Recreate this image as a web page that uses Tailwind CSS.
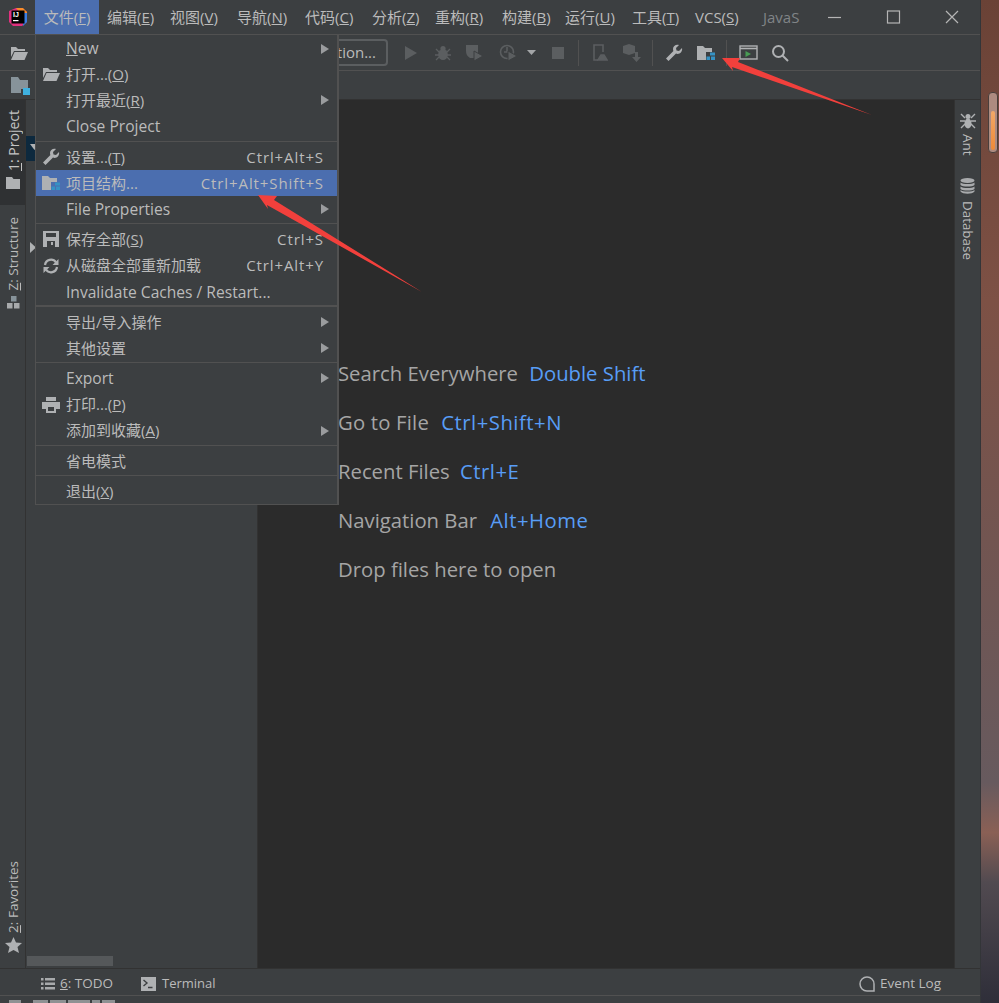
<!DOCTYPE html>
<html lang="en">
<head>
  <meta charset="UTF-8" />
  <title>IntelliJ IDEA</title>
  <script src="https://cdn.jsdelivr.net/npm/@tailwindcss/browser@4"></script>
</head>
<body class="relative flex w-[999px] h-[1003px] overflow-hidden bg-[#3c3f41] text-[#bbbbbb] text-[15px] font-['Open_Sans','Noto_Sans_CJK_SC',sans-serif]">

  <!-- IDE window -->
  <div class="flex flex-col w-[981px] h-full border-r border-[#333538]">

    <!-- Title bar + main menu -->
    <header class="flex items-center h-[35px] shrink-0 border-b border-[#515151]">
      <div class="w-[35px] shrink-0 flex justify-center">
        <svg width="20" height="20" viewBox="0 0 20 20">
          <path d="M1 4 L8 1 H14 L19 5 V15 L14 19 H5 L1 15 Z" fill="#e0317e"/>
          <path d="M8 1 H15 L19 5 V9 L12 6 Z" fill="#f98b2a"/>
          <path d="M15 6 L19 6 V15 L15 19 Z" fill="#3a7ce0"/>
          <rect x="3.5" y="3.5" width="13" height="13" fill="#000"/>
          <text x="5" y="10" font-size="7" font-weight="700" fill="#fff" font-family="Liberation Sans">IJ</text>
          <rect x="5" y="13" width="5.5" height="1.2" fill="#fff"/>
        </svg>
      </div>
      <nav class="flex items-center h-full shrink-0 whitespace-nowrap">
        <div class="h-full flex items-center justify-center w-[64px] bg-[#4b6eaf]">文件(<span class="underline">F</span>)</div>
        <div class="w-[63px] pl-[8px]">编辑(<span class="underline">E</span>)</div>
        <div class="w-[67px] pl-[8px]">视图(<span class="underline">V</span>)</div>
        <div class="w-[68px] pl-[8px]">导航(<span class="underline">N</span>)</div>
        <div class="w-[67px] pl-[8px]">代码(<span class="underline">C</span>)</div>
        <div class="w-[63px] pl-[8px]">分析(<span class="underline">Z</span>)</div>
        <div class="w-[67px] pl-[8px]">重构(<span class="underline">R</span>)</div>
        <div class="w-[63px] pl-[8px]">构建(<span class="underline">B</span>)</div>
        <div class="w-[67px] pl-[8px]">运行(<span class="underline">U</span>)</div>
        <div class="w-[63px] pl-[8px]">工具(<span class="underline">T</span>)</div>
        <div class="w-[68px] pl-[8px]">VCS(<span class="underline">S</span>)</div>
        <div class="ml-[8px] text-[#808487]">JavaS</div>
      </nav>
      <div class="ml-auto flex items-center text-[#b5b5b5]">
        <svg class="w-[59px]" height="14" viewBox="0 0 59 14"><path d="M23 7.5 H36" stroke="currentColor" stroke-width="1.2"/></svg>
        <svg class="w-[59px] mr-[1px]" height="14" viewBox="0 0 59 14"><rect x="23.5" y="1" width="12" height="12" fill="none" stroke="currentColor" stroke-width="1.2"/></svg>
        <svg class="w-[56px]" height="14" viewBox="0 0 56 14"><path d="M22 1 L34 13 M34 1 L22 13" stroke="currentColor" stroke-width="1.2"/></svg>
      </div>
    </header>

    <!-- Toolbar -->
    <div class="flex items-center h-[36px] shrink-0 border-b border-[#515151]">
      <div class="w-[38px] shrink-0 flex justify-center">
        <svg width="18" height="14" viewBox="0 0 18 14" fill="#afb1b3"><path d="M1 1 H6 L8 3 H15 V5 H4 L1 11 Z"/><path d="M4.5 6 H18 L14.5 14 H1 Z"/></svg>
      </div>
      <!-- run configuration button, mostly under the menu -->
      <div class="ml-[180px] w-[170px] h-[27px] shrink-0 flex items-center justify-end pr-[10px] whitespace-nowrap rounded-[4px] border-2 border-[#5b5e60] text-[#bbbbbb]">Add Configuration...</div>
      <div class="flex items-center ml-[7px] text-[#5b5e60]">
        <div class="w-[32px] flex justify-center"><svg width="14" height="16" viewBox="0 0 14 16" fill="currentColor"><path d="M1 1 L13 8 L1 15 Z"/></svg></div>
        <div class="w-[32px] flex justify-center"><svg width="16" height="16" viewBox="0 0 16 16" fill="currentColor"><ellipse cx="8" cy="9.5" rx="4.8" ry="5.5"/><circle cx="8" cy="3.5" r="2.6"/><path d="M1 4 L4 7 M15 4 L12 7 M0 10 H4 M16 10 H12 M1 15 L4 12 M15 15 L12 12" stroke="currentColor" stroke-width="1.3"/></svg></div>
        <div class="w-[32px] flex justify-center"><svg width="20" height="18" viewBox="0 0 20 18" fill="currentColor"><path d="M1 1 H13 V9 L9 14 H5 C2 12 1 10 1 7 Z"/><path d="M9 7 L18 12 L9 17 Z" stroke="#3c3f41" stroke-width="1"/></svg></div>
        <div class="w-[36px] flex justify-center"><svg width="20" height="18" viewBox="0 0 20 18" fill="none" stroke="currentColor" stroke-width="1.6"><circle cx="8" cy="8" r="6.5"/><path d="M8 3 V8 H5"/><path d="M9 7 L18 12 L9 17 Z" fill="currentColor" stroke="#3c3f41" stroke-width="1"/></svg></div>
        <svg class="mr-[11px]" width="9" height="5" viewBox="0 0 9 5" fill="#a4a6a8"><path d="M0 0 H9 L4.5 5 Z"/></svg>
        <div class="w-[22px] flex justify-center"><div class="w-[12px] h-[12px] bg-[#5b5e60]"></div></div>
        <div class="w-px h-[26px] bg-[#515151] ml-[9px]"></div>
        <div class="w-[42px] flex justify-center"><svg width="16" height="18" viewBox="0 0 16 18" fill="none" stroke="currentColor" stroke-width="1.6"><path d="M6 16 H2 V1 H11 V8"/><path d="M6 16 L9 11 H12 L15 16 Z" fill="currentColor"/></svg></div>
        <div class="w-[22px] flex justify-center"><svg width="18" height="18" viewBox="0 0 18 18" fill="currentColor"><path d="M6 0 L12 2 V9 L6 11 L0 9 V2 Z"/><path d="M12 8 H15 V13 H18 L13.5 18 L9 13 H12 Z"/></svg></div>
        <div class="w-px h-[26px] bg-[#515151] ml-[9px]"></div>
      </div>
      <div class="flex items-center text-[#afb1b3]">
        <div class="w-[42px] flex justify-center"><svg width="18" height="18" viewBox="0 0 18 18" fill="currentColor"><path d="M17 4 L14 7 L11.5 6.5 L11 4 L14 1 C11 0 8 2 8 5 C8 6 8.2 6.5 8.4 7 L1 14.5 L3.5 17 L11 9.6 C14 11 18 8 17 4 Z"/></svg></div>
        <div class="w-[22px] flex justify-center"><svg width="19" height="16" viewBox="0 0 19 16"><path d="M0 1 H6 L8 3 H15 V7 H9 V15 H0 Z" fill="#afb1b3"/><path d="M13 7.5 H18 V10.5 H13 Z M9.5 11.5 H13 V15 H9.5 Z M14 11.5 H18 V15 H14 Z" fill="#3592c4"/></svg></div>
        <div class="w-px h-[26px] bg-[#515151] ml-[9px]"></div>
        <div class="w-[42px] flex justify-center"><svg width="19" height="15" viewBox="0 0 19 15" fill="none"><rect x="1" y="1" width="17" height="13" stroke="#afb1b3" stroke-width="1.4"/><path d="M1 3.5 H18" stroke="#afb1b3" stroke-width="1.6"/><path d="M6.5 6 L12 9 L6.5 12 Z" fill="#499c54"/></svg></div>
        <div class="w-[22px] flex justify-center"><svg width="18" height="18" viewBox="0 0 18 18" fill="none" stroke="currentColor" stroke-width="2"><circle cx="7.5" cy="7.5" r="5.5"/><path d="M11.5 11.5 L17 17"/></svg></div>
      </div>
    </div>

    <!-- Navigation bar -->
    <div class="flex items-center h-[29px] shrink-0 pl-[11px] border-b border-[#323232]">
      <svg width="20" height="19" viewBox="0 0 20 19"><path d="M0 1 H7 L9 4 H17 V13 H10 V17 H0 Z" fill="#87939a"/><rect x="12" y="12" width="7" height="7" fill="#3fb1e0"/></svg>
    </div>

    <!-- Tool strips, project panel, editor -->
    <div class="flex flex-1 min-h-0">
      <aside class="flex flex-col items-center w-[26px] shrink-0 border-r border-[#323232] text-[13.5px]">
        <div class="w-full h-[105px] flex flex-col items-center pl-[1px] bg-[#2f3133] text-[14px] text-[#c4c4c4]">
          <span class="mt-[10px] [writing-mode:vertical-rl] rotate-180"><span class="underline">1</span>: Project</span>
          <svg class="mt-[6px]" width="14" height="12" viewBox="0 0 14 12" fill="#afb1b3"><path d="M0 0 H6 L7.5 2 H14 V12 H0 Z"/></svg>
        </div>
        <span class="mt-[12px] ml-[1px] [writing-mode:vertical-rl] rotate-180"><span class="underline">Z</span>: Structure</span>
        <svg class="mt-[6px] ml-[1px]" width="13" height="13" viewBox="0 0 13 13" fill="#a8aaac"><rect x="4" y="0" width="5.5" height="5.5" fill="#87939a"/><rect x="0" y="7" width="5.5" height="5.5"/><rect x="7" y="7" width="5.5" height="5.5"/></svg>
        <span class="mt-auto ml-[1px] [writing-mode:vertical-rl] rotate-180"><span class="underline">2</span>: Favorites</span>
        <svg class="mt-[4px] mb-[15px] ml-[1px]" width="17" height="16" viewBox="0 0 17 16" fill="#afb1b3"><path d="M8.5 0 L11 5.5 L17 6 L12.5 10 L14 16 L8.5 13 L3 16 L4.5 10 L0 6 L6 5.5 Z"/></svg>
      </aside>

      <section class="relative w-[232px] shrink-0 border-r border-[#323232]">
        <div class="absolute left-0 top-[36px] w-[11px] h-[25px] bg-[#0d293e]"></div>
        <svg class="absolute left-[4px] top-[44px]" width="9" height="6" viewBox="0 0 9 6" fill="#afb1b3"><path d="M0 0 H9 L4.5 6 Z"/></svg>
        <svg class="absolute left-[4px] top-[142px]" width="6" height="11" viewBox="0 0 6 11" fill="#afb1b3"><path d="M0 0 L6 5.5 L0 11 Z"/></svg>
        <div class="absolute left-[1px] bottom-[2px] w-[86px] h-[10px] bg-[#55585a]"></div>
      </section>

      <main class="flex-1 bg-[#2b2b2b] pl-[80px] pt-[258px] text-[20.3px] text-[#a5a5a5]">
        <p class="h-[49px]">Search Everywhere <span class="ml-[6px] text-[#589df6]">Double Shift</span></p>
        <p class="h-[49px]"><span class="tracking-[0.2px]">Go to File</span> <span class="ml-[7px] tracking-[0.5px] text-[#589df6]">Ctrl+Shift+N</span></p>
        <p class="h-[49px]">Recent Files <span class="ml-[5px] tracking-[0.5px] text-[#589df6]">Ctrl+E</span></p>
        <p class="h-[49px]">Navigation Bar <span class="ml-[8px] tracking-[0.5px] text-[#589df6]">Alt+Home</span></p>
        <p class="h-[49px]">Drop files here to open</p>
      </main>

      <aside class="flex flex-col items-center w-[26px] shrink-0 border-l border-[#323232] text-[13.4px] pt-[13px]">
        <svg width="16" height="16" viewBox="0 0 16 16" fill="#afb1b3"><ellipse cx="8" cy="10.5" rx="3.5" ry="5"/><circle cx="8" cy="3.5" r="2.5"/><path d="M1 1 L5 5 M15 1 L11 5 M0 8 H5 M16 8 H11 M1 15 L5 11 M15 15 L11 11" stroke="#afb1b3" stroke-width="1.4"/></svg>
        <span class="mt-[5px] [writing-mode:vertical-rl]">Ant</span>
        <svg class="mt-[23px]" width="15" height="16" viewBox="0 0 15 16" fill="#a8aaac"><ellipse cx="7.5" cy="2.5" rx="7" ry="2.5"/><path d="M0.5 4.5 C3 6.5 12 6.5 14.5 4.5 V7 C12 9 3 9 0.5 7 Z"/><path d="M0.5 8.5 C3 10.5 12 10.5 14.5 8.5 V11 C12 13 3 13 0.5 11 Z"/><path d="M0.5 12 C3 14 12 14 14.5 12 V13.5 C12 16.5 3 16.5 0.5 13.5 Z"/></svg>
        <span class="mt-[7px] [writing-mode:vertical-rl]">Database</span>
      </aside>
    </div>

    <!-- Tool window bar -->
    <footer class="flex items-center h-[27px] shrink-0 pt-[3px] text-[13.5px] border-t border-[#323232]">
      <svg class="ml-[41px]" width="14" height="12" viewBox="0 0 14 12" fill="#a8aaac"><path d="M0 0 H2.5 V2.5 H0 Z M4 0 H14 V2.5 H4 Z M0 4.5 H2.5 V7 H0 Z M4 4.5 H14 V7 H4 Z M0 9 H2.5 V11.5 H0 Z M4 9 H14 V11.5 H4 Z"/></svg>
      <span class="ml-[5px]"><span class="underline">6</span>: TODO</span>
      <svg class="ml-[28px]" width="15" height="14" viewBox="0 0 15 14"><rect width="15" height="14" fill="#afb1b3"/><path d="M2.5 3 L6 6 L2.5 9 M7 10.5 H11.5" fill="none" stroke="#3c3f41" stroke-width="1.4"/></svg>
      <span class="ml-[6px] text-[13px]">Terminal</span>
      <svg class="ml-auto" width="16" height="16" viewBox="0 0 16 16" fill="none" stroke="#afb1b3" stroke-width="1.5"><path d="M15 15 H8 A7 7 0 1 1 15 8 Z"/></svg>
      <span class="ml-[5px] mr-[39px]">Event Log</span>
    </footer>

    <!-- Status bar, cut off by the capture: only the tops of its contents show -->
    <div class="flex h-[8px] shrink-0 items-end border-t border-[#515151] pl-[9px] gap-[2px]">
      <div class="w-[12px] h-[3px] mr-[10px] bg-[#8f9193]"></div>
      <div class="w-[15px] h-[3px] bg-[#8f9193]"></div>
      <div class="w-[16px] h-[3px] bg-[#8f9193]"></div>
      <div class="w-[22px] h-[3px] bg-[#8f9193]"></div>
      <div class="w-[8px] h-[3px] bg-[#8f9193]"></div>
      <div class="w-[13px] h-[3px] bg-[#8f9193]"></div>
    </div>
  </div>

  <!-- Desktop wallpaper at the right -->
  <div class="relative flex-1 bg-[linear-gradient(180deg,#6a4236_0%,#7d5145_30%,#6f5654_60%,#675a5e_78%,#8a6055_83%,#514a50_88%,#2e2e39_100%)]">
    <div class="absolute left-[7px] top-[92px] w-[10px] h-[61px] p-[2px] pt-[18px] rounded-[4px] border border-[#4a3f3c] bg-[#ad8b80]">
      <div class="w-full h-full rounded-[2px] bg-[linear-gradient(180deg,#f0a868,#ef8a38)]"></div>
    </div>
  </div>

  <!-- File menu -->
  <div class="absolute left-[35px] top-[34px] w-[304px] h-[471px] border border-[#515151] border-r-2 bg-[#3c3f41] whitespace-nowrap">
    <div class="flex items-center h-[26.2px] pl-[30px] pt-px text-[15.6px]"><span><span class="underline">N</span>ew</span><svg class="ml-auto mr-[8px]" width="8" height="10" viewBox="0 0 8 10" fill="#9a9c9e"><path d="M0 0 L8 5 L0 10 Z"/></svg></div>
    <div class="flex items-center h-[26.2px]"><div class="w-[30px] flex justify-center"><svg width="18" height="14" viewBox="0 0 18 14" fill="#afb1b3"><path d="M1 1 H6 L8 3 H15 V5 H4 L1 11 Z"/><path d="M4.5 6 H18 L14.5 14 H1 Z"/></svg></div><span>打开...(<span class="underline">O</span>)</span></div>
    <div class="flex items-center h-[26.2px] pl-[30px]"><span>打开最近(<span class="underline">R</span>)</span><svg class="ml-auto mr-[8px]" width="8" height="10" viewBox="0 0 8 10" fill="#9a9c9e"><path d="M0 0 L8 5 L0 10 Z"/></svg></div>
    <div class="flex items-center h-[26.2px] pl-[30px] pt-px text-[15.6px]">Close Project</div>
    <div class="h-px mt-px mb-[2px] bg-[#515151]"></div>

    <div class="flex items-center h-[26.2px]"><div class="w-[30px] flex justify-center"><svg width="18" height="18" viewBox="0 0 18 18" fill="#afb1b3"><path d="M17 4 L14 7 L11.5 6.5 L11 4 L14 1 C11 0 8 2 8 5 C8 6 8.2 6.5 8.4 7 L1 14.5 L3.5 17 L11 9.6 C14 11 18 8 17 4 Z"/></svg></div><span>设置...(<span class="underline">T</span>)</span><span class="ml-auto mr-[13px] tracking-[0.9px]">Ctrl+Alt+S</span></div>
    <div class="flex items-center h-[26.2px] bg-[#4b6eaf]"><div class="w-[30px] flex justify-center"><svg width="19" height="16" viewBox="0 0 19 16"><path d="M0 1 H6 L8 3 H15 V7 H9 V15 H0 Z" fill="#afb1b3"/><path d="M13 7.5 H18 V10.5 H13 Z M9.5 11.5 H13 V15 H9.5 Z M14 11.5 H18 V15 H14 Z" fill="#3592c4"/></svg></div><span>项目结构...</span><span class="ml-auto mr-[13px] tracking-[0.9px]">Ctrl+Alt+Shift+S</span></div>
    <div class="flex items-center h-[26.2px] pl-[30px] text-[15.6px]">File Properties<svg class="ml-auto mr-[8px]" width="8" height="10" viewBox="0 0 8 10" fill="#9a9c9e"><path d="M0 0 L8 5 L0 10 Z"/></svg></div>
    <div class="h-px mt-px mb-[2px] bg-[#515151]"></div>

    <div class="flex items-center h-[26.2px]"><div class="w-[30px] flex justify-center"><svg width="16" height="16" viewBox="0 0 16 16" fill="#afb1b3"><path fill-rule="evenodd" d="M0 0 H16 V16 H0 Z M3 2 V6 H13 V2 Z M4 10 V16 H12 V10 Z"/><rect x="8" y="11" width="2" height="3"/></svg></div><span>保存全部(<span class="underline">S</span>)</span><span class="ml-auto mr-[13px] tracking-[0.9px]">Ctrl+S</span></div>
    <div class="flex items-center h-[26.2px]"><div class="w-[30px] flex justify-center"><svg width="16" height="16" viewBox="0 0 16 16" fill="none" stroke="#afb1b3" stroke-width="2.2"><path d="M2 7 A6 6 0 0 1 13 4.5"/><path d="M14 9 A6 6 0 0 1 3 11.5"/><path d="M15.5 1 V7 H9.5 Z M0.5 15 V9 H6.5 Z" fill="#afb1b3" stroke="none"/></svg></div><span>从磁盘全部重新加载</span><span class="ml-auto mr-[13px] tracking-[0.9px]">Ctrl+Alt+Y</span></div>
    <div class="flex items-center h-[26.2px] pl-[30px] pt-px text-[15.6px]">Invalidate Caches / Restart...</div>
    <div class="h-[2px] mb-[2px] bg-[#515151]"></div>

    <div class="flex items-center h-[26.2px] pl-[30px]">导出/导入操作<svg class="ml-auto mr-[8px]" width="8" height="10" viewBox="0 0 8 10" fill="#9a9c9e"><path d="M0 0 L8 5 L0 10 Z"/></svg></div>
    <div class="flex items-center h-[26.2px] pl-[30px]">其他设置<svg class="ml-auto mr-[8px]" width="8" height="10" viewBox="0 0 8 10" fill="#9a9c9e"><path d="M0 0 L8 5 L0 10 Z"/></svg></div>
    <div class="h-px mt-px mb-[2px] bg-[#515151]"></div>

    <div class="flex items-center h-[26.2px] pl-[30px] text-[15.6px]">Export<svg class="ml-auto mr-[8px]" width="8" height="10" viewBox="0 0 8 10" fill="#9a9c9e"><path d="M0 0 L8 5 L0 10 Z"/></svg></div>
    <div class="flex items-center h-[26.2px]"><div class="w-[30px] flex justify-center"><svg width="18" height="16" viewBox="0 0 18 16" fill="#afb1b3"><path fill-rule="evenodd" d="M4 0 H14 V4 H4 Z M0 5 H18 V12 H14 V16 H4 V12 H0 Z M6 10 V14 H12 V10 Z"/></svg></div><span>打印...(<span class="underline">P</span>)</span></div>
    <div class="flex items-center h-[26.2px] pl-[30px]"><span>添加到收藏(<span class="underline">A</span>)</span><svg class="ml-auto mr-[8px]" width="8" height="10" viewBox="0 0 8 10" fill="#9a9c9e"><path d="M0 0 L8 5 L0 10 Z"/></svg></div>
    <div class="h-px mt-px mb-[2px] bg-[#515151]"></div>

    <div class="flex items-center h-[26.2px] pl-[30px]">省电模式</div>
    <div class="h-px mt-px mb-[2px] bg-[#515151]"></div>

    <div class="flex items-center h-[26.2px] pl-[30px]"><span>退出(<span class="underline">X</span>)</span></div>
  </div>

  <!-- Red annotation arrows -->
  <svg class="absolute left-0 top-0 pointer-events-none" width="999" height="1003" viewBox="0 0 999 1003" fill="#f2403c">
    <path d="M722 58 L740 58 L738 62 L872 115 L732 67 L733 71 Z"/>
    <path d="M258 195 L277 196 L274 200 L422 292 L267 205 L268 209 Z"/>
  </svg>
</body>
</html>
